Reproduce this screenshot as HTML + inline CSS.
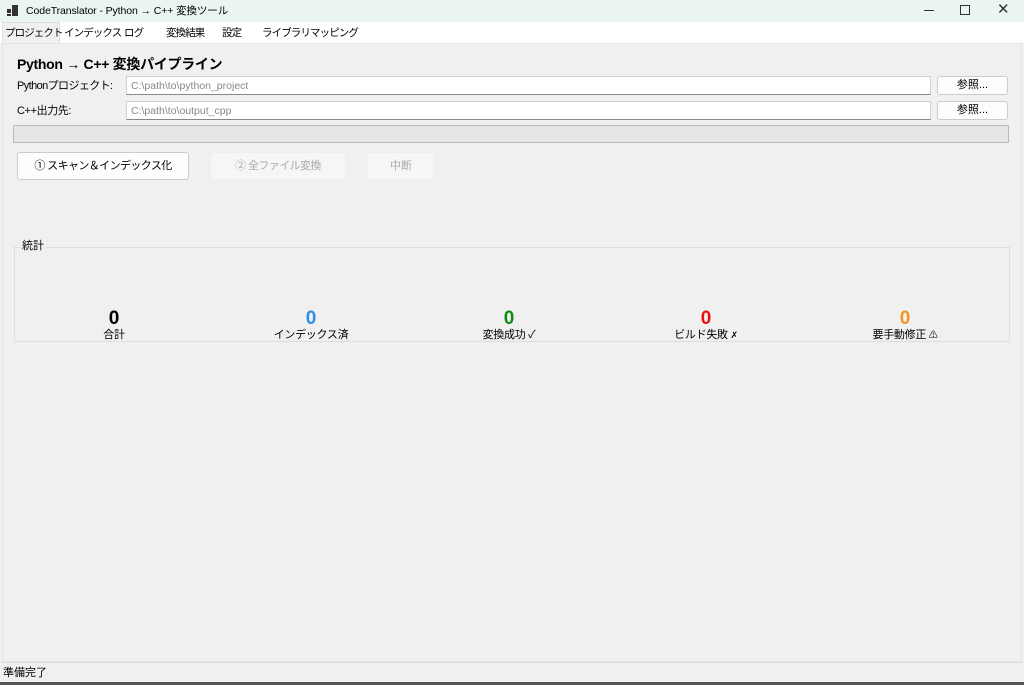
<!DOCTYPE html>
<html><head><meta charset="utf-8"><style>
*{margin:0;padding:0;box-sizing:border-box}
body{width:1024px;height:685px;overflow:hidden;background:#f0f0f0;font-family:"Liberation Sans","Noto Sans CJK JP",sans-serif;font-size:11px;color:#000;position:relative}
.a{position:absolute;white-space:nowrap;line-height:1.2}
.title{left:0;top:0;width:1024px;height:22px;background:#eaf5f3}
.tabs{left:0;top:22px;width:1024px;height:21px;background:#fff}
.tab{top:27px;font-size:10.5px;letter-spacing:-0.9px}
.panel{left:2px;top:43px;width:1020px;height:619px;background:#f0f0f0;border:1px solid #e4e4e4}
.inp{background:#fff;border:1px solid #d0d0d0;border-bottom:1px solid #888;height:19px;color:#888;padding:3px 4px 0;font-size:10.5px}
.btn{background:#fdfdfd;border:1px solid #ccc;border-radius:3px;text-align:center;font-size:11px}
.stat{width:190px;text-align:center;letter-spacing:-0.3px}
.num{font-size:19px;font-weight:bold;line-height:20px;letter-spacing:0}
</style></head><body>
<div class="a title"></div>
<svg class="a" style="left:7px;top:5px" width="12" height="12"><rect x="0" y="4" width="4" height="4" fill="#333"/><rect x="5" y="0" width="6" height="11" fill="#333"/><rect x="0" y="9" width="4" height="2" fill="#333"/></svg>
<div class="a" style="left:26px;top:5px;font-size:10.5px;letter-spacing:-0.1px">CodeTranslator - Python → C++ 変換ツール</div>
<div class="a" style="left:924px;top:10px;width:10px;height:1px;background:#333"></div>
<div class="a" style="left:960px;top:5px;width:10px;height:10px;border:1px solid #333"></div>
<div class="a" style="left:997px;top:1px;font-size:15px;color:#333">✕</div>
<div class="a tabs"></div>
<div class="a" style="left:2px;top:22px;width:58px;height:22px;background:#f0f0f0;border:1px solid #ddd;border-bottom:none"></div>
<div class="a tab" style="left:5px">プロジェクト</div>
<div class="a tab" style="left:64px">インデックス</div>
<div class="a tab" style="left:124px">ログ</div>
<div class="a tab" style="left:166px">変換結果</div>
<div class="a tab" style="left:222px">設定</div>
<div class="a tab" style="left:262px">ライブラリマッピング</div>
<div class="a panel"></div>
<div class="a" style="left:17px;top:56px;font-size:14px;font-weight:bold;letter-spacing:-0.3px">Python → C++ 変換パイプライン</div>
<div class="a" style="left:17px;top:80px;letter-spacing:-0.6px">Pythonプロジェクト:</div>
<div class="a inp" style="left:126px;top:76px;width:805px">C:\path\to\python_project</div>
<div class="a btn" style="left:937px;top:76px;width:71px;height:19px;line-height:17px">参照...</div>
<div class="a" style="left:17px;top:105px;letter-spacing:-0.4px">C++出力先:</div>
<div class="a inp" style="left:126px;top:101px;width:805px">C:\path\to\output_cpp</div>
<div class="a btn" style="left:937px;top:101px;width:71px;height:19px;line-height:17px">参照...</div>
<div class="a" style="left:13px;top:125px;width:996px;height:18px;background:#e6e6e6;border:1px solid #bcbcbc"></div>
<div class="a btn" style="left:17px;top:152px;width:172px;height:28px;line-height:26px;letter-spacing:-0.6px">① スキャン＆インデックス化</div>
<div class="a btn" style="left:210px;top:152px;width:136px;height:28px;line-height:26px;color:#aaa;background:#f6f6f6;border-color:#eee;letter-spacing:-0.6px">② 全ファイル変換</div>
<div class="a btn" style="left:367px;top:152px;width:68px;height:28px;line-height:26px;color:#aaa;background:#f6f6f6;border-color:#eee">中断</div>
<div class="a" style="left:14px;top:247px;width:996px;height:95px;border:1px solid #ddd"></div>
<div class="a" style="left:20px;top:240px;background:#f0f0f0;padding:0 2px">統計</div>
<div class="a stat" style="left:19px;top:309px"><div class="num">0</div>合計</div>
<div class="a stat" style="left:216px;top:309px"><div class="num" style="color:#2f8ee5">0</div>インデックス済</div>
<div class="a stat" style="left:414px;top:309px"><div class="num" style="color:#138a13">0</div>変換成功 ✓</div>
<div class="a stat" style="left:611px;top:309px"><div class="num" style="color:#e81010">0</div>ビルド失敗 <span style="font-size:9px">✗</span></div>
<div class="a stat" style="left:810px;top:309px"><div class="num" style="color:#f0961e">0</div>要手動修正 <span style="font-size:9px">⚠</span></div>
<div class="a" style="left:0;top:662px;width:1024px;height:20px;background:#f0f0f0;border-top:1px solid #ddd"></div>
<div class="a" style="left:3px;top:667px">準備完了</div>
<div class="a" style="left:0;top:682px;width:1024px;height:3px;background:#555"></div>
</body></html>
